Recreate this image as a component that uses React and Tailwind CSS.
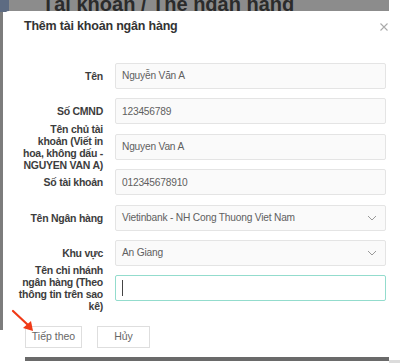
const rows = [
  { label: ['Tên'], value: 'Nguyễn Văn A' },
  { label: ['Số CMND'], value: '123456789' },
  { label: ['Tên chủ tài', 'khoản (Viết in', 'hoa, không dấu -', 'NGUYEN VAN A)'], value: 'Nguyen Van A' },
  { label: ['Số tài khoản'], value: '012345678910' },
  { label: ['Tên Ngân hàng'], value: 'Vietinbank - NH Cong Thuong Viet Nam', select: true },
  { label: ['Khu vực'], value: 'An Giang', select: true },
  { label: ['Tên chi nhánh', 'ngân hàng (Theo', 'thông tin trên sao', 'kê)'], value: '', focus: true },
];

function Chevron() {
  return (
    <svg width="10" height="6" viewBox="0 0 10 6" className="shrink-0">
      <path d="M1 1l4 4 4-4" fill="none" stroke="#999" strokeWidth="1" />
    </svg>
  );
}

function Field({ row }) {
  return (
    <div className="flex items-center h-[26px]">
      <div className="w-[84px] shrink-0 flex flex-col items-end text-[10.5px] leading-[12px] font-bold tracking-[-0.25px] text-[#3d3d3d]">
        {row.label.map((l, i) => (
          <div key={i} className="whitespace-nowrap">{l}</div>
        ))}
      </div>
      <div
        className={
          row.focus
            ? 'ml-[12px] flex-1 h-full flex items-center px-[6px] rounded-[2px] border border-[#93dccd] bg-white'
            : 'ml-[12px] flex-1 h-full flex items-center justify-between px-[6px] pr-[8px] rounded-[2px] border border-[#e4e4e4] bg-[#fafafa]'
        }
      >
        {row.focus ? (
          <span className="w-px h-[16px] bg-[#444]" />
        ) : (
          <span className="text-[10.2px] tracking-[-0.2px] text-[#606060]">{row.value}</span>
        )}
        {row.select && <Chevron />}
      </div>
    </div>
  );
}

export default function App() {
  return (
    <div className="relative w-[400px] h-[363px] overflow-hidden bg-white font-['Liberation_Sans',Arial,sans-serif]">
      {/* page behind the modal */}
      <div className="absolute left-0 top-0 w-[389px] h-[12px] bg-[#8c8c8c] overflow-hidden">
        <div className="absolute left-[42px] -top-[11px] text-[20px] font-bold text-[#2b2b2b] whitespace-nowrap">
          Tài khoản / Thẻ ngân hàng
        </div>
      </div>
      <div className="absolute left-0 top-0 w-[9px] h-[12px] bg-[#5d6b82]" />
      <div className="absolute left-0 top-[12px] w-[3px] h-[318px] bg-[#7c7c7c]" />
      <div className="absolute left-[25px] top-[357px] w-[364px] h-[4px] bg-[#6a6a6a]" />
      <div className="absolute left-[389px] top-[360px] w-[11px] h-[3px] bg-[#dcdcdc]" />

      {/* modal */}
      <div className="relative ml-[4px] mt-[11px] w-[396px] h-[346px] bg-white rounded-tl-[5px] pr-[14px]">
        <div className="flex items-center justify-between pl-[20px] pt-[1px] h-[30px]">
          <h2 className="text-[12.5px] tracking-[-0.2px] font-bold text-[#333]">Thêm tài khoản ngân hàng</h2>
          <svg width="8" height="8" viewBox="0 0 8 8" className="mr-[-2px]">
            <path d="M0.5 0.5l7 7M7.5 0.5l-7 7" stroke="#aaa" strokeWidth="1.1" />
          </svg>
        </div>

        <div className="flex flex-col gap-[9.4px] pl-[15px] mt-[22px]">
          {rows.map((r, i) => (
            <Field key={i} row={r} />
          ))}
        </div>

        <div className="flex gap-[15px] pl-[21px] mt-[25px]">
          <button className="w-[57px] h-[22px] border border-[#dedede] text-[10.5px] text-[#666] bg-white">
            Tiếp theo
          </button>
          <button className="w-[53px] h-[22px] border border-[#dedede] text-[10.5px] text-[#666] bg-white">
            Hủy
          </button>
        </div>
      </div>

      {/* red annotation arrow */}
      <svg className="absolute left-[10px] top-[308px]" width="28" height="26" viewBox="0 0 28 26">
        <path d="M3 3L18 17" stroke="#f03a17" strokeWidth="2.2" strokeLinecap="round" />
        <path d="M13 20L23 23L21 13Z" fill="#f03a17" />
      </svg>
    </div>
  );
}
